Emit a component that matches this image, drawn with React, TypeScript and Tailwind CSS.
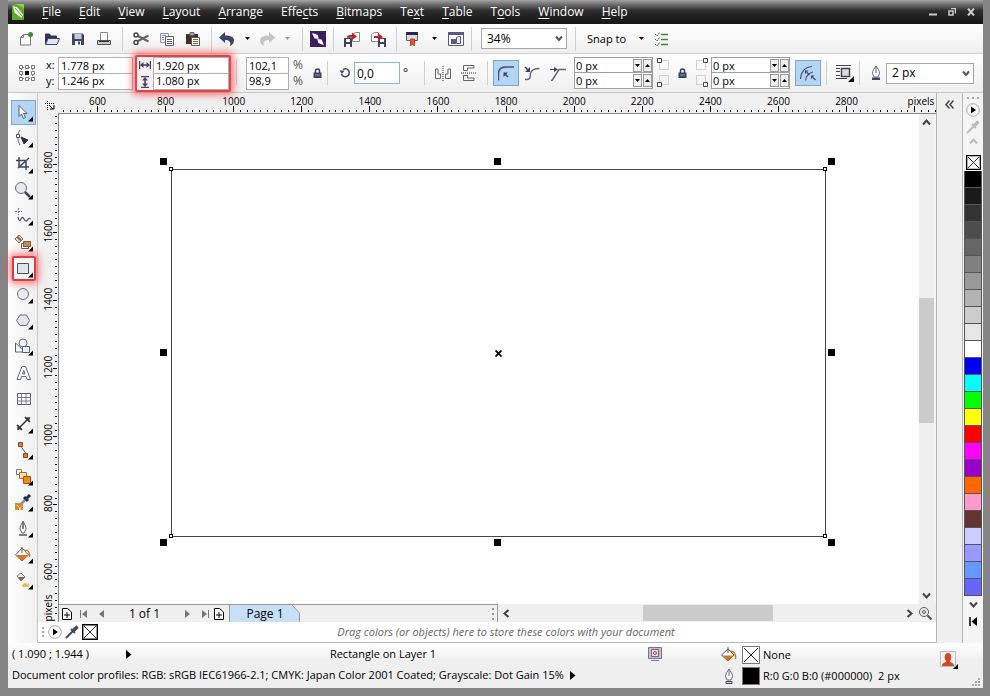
import React from "react";

type Kids = { children?: React.ReactNode };

function Icon({ children, size = "w-4 h-4", box = "0 0 16 16" }: Kids & { size?: string; box?: string }) {
  return (
    <svg className={`${size} shrink-0`} viewBox={box} fill="none" stroke="#3d4468" strokeWidth="1" aria-hidden="true">
      {children}
    </svg>
  );
}

/* ---------- menu bar ---------- */

const menus: [string, string, string][] = [
  ["", "F", "ile"],
  ["", "E", "dit"],
  ["", "V", "iew"],
  ["", "L", "ayout"],
  ["", "A", "rrange"],
  ["Effe", "c", "ts"],
  ["", "B", "itmaps"],
  ["Te", "x", "t"],
  ["", "T", "able"],
  ["T", "o", "ols"],
  ["", "W", "indow"],
  ["", "H", "elp"],
];

function MenuBar() {
  return (
    <header className="flex h-6 shrink-0 items-center bg-linear-to-b from-[#a4a4a4] via-[#2c2c2c] via-45% to-[#151515] text-white">
      <svg className="mx-1 h-4 w-3 shrink-0" viewBox="0 0 12 16" aria-hidden="true">
        <path d="M0 0h12v16H0z" fill="#5cab2f" />
        <path d="M0 0h12v4L4 0z" fill="#8fd05a" />
        <path d="M1 2l4.500 1.500L11 11l-1.500 3L2.500 8.500z" fill="#f4faee" />
        <path d="M3 4l7 8" stroke="#3d8020" strokeWidth=".8" />
      </svg>
      <nav className="flex grow gap-[18px] pl-[14px] text-[12px] leading-4">
        {menus.map(([a, b, c]) => (
          <button key={a + b + c} type="button">
            {a}
            <span className="underline underline-offset-2">{b}</span>
            {c}
          </button>
        ))}
      </nav>
      <div className="flex items-center gap-[11px] pr-2">
        <button type="button" aria-label="Minimize">
          <Icon size="w-2 h-2" box="0 0 8 8"><path d="M0 6.500h8" stroke="#ccc" strokeWidth="2" /></Icon>
        </button>
        <button type="button" aria-label="Restore">
          <Icon size="w-2 h-2" box="0 0 8 8"><path d="M1 3h4v4H1zM3 .5h4.500v5" stroke="#ccc" strokeWidth="1.500" /></Icon>
        </button>
        <button type="button" aria-label="Close">
          <Icon size="w-2 h-2" box="0 0 8 8"><path d="M1 .5l6 7M7 .5l-6 7" stroke="#ccc" strokeWidth="2" /></Icon>
        </button>
      </div>
    </header>
  );
}

/* ---------- shared pieces ---------- */

function Separator() {
  return <div className="mx-[5px] h-6 w-px shrink-0 bg-[#cfcfcf]" />;
}

function Cell({ label, wide, children }: Kids & { label: string; wide?: boolean }) {
  return (
    <button type="button" aria-label={label} className={`flex h-6 shrink-0 items-center justify-center ${wide ? "w-[26px]" : "w-5"}`}>
      {children}
    </button>
  );
}

function Caret({ color = "#000" }: { color?: string }) {
  return <Icon size="w-[5px] h-[3px]" box="0 0 5 3"><path d="M0 0h5L2.500 3z" fill={color} stroke="none" /></Icon>;
}

function DropDown({ label, value, width }: { label: string; value: string; width: string }) {
  return (
    <div className={`relative shrink-0 ${width}`}>
      <select aria-label={label} className="block h-[21px] w-full appearance-none border border-[#a9a9a9] bg-white pl-[5px] text-[12px] leading-4">
        <option>{value}</option>
      </select>
      <svg className="pointer-events-none absolute top-[7px] right-1 h-[7px] w-2" viewBox="0 0 8 7" fill="none" aria-hidden="true">
        <path d="M1 1.500l3 3.500 3-3.500" stroke="#555" strokeWidth="2" />
      </svg>
    </div>
  );
}

/* ---------- standard toolbar ---------- */

function StandardBar() {
  return (
    <div className="flex h-[30px] shrink-0 items-center border-b border-[#cfcfcf] bg-linear-to-b from-white to-[#efefef] pl-[5px]">
      <Cell label="New" wide>
        <Icon><path d="M2.500 6.500l3-3h7v10.500h-10z" fill="#fff" stroke="#777" /><path d="M2.500 6.500h3v-3" stroke="#777" /><circle cx="12.500" cy="3.500" r="2.500" fill="#2f8f3c" stroke="none" /></Icon>
      </Cell>
      <Cell label="Open" wide>
        <Icon><path d="M1.500 13V3h4l1 2h6v2" fill="#2e3558" stroke="#2e3558" /><path d="M1.500 13.500L4 7.500h11.500L13 13.500z" fill="#e4e4ea" /></Icon>
      </Cell>
      <Cell label="Save" wide>
        <Icon><path d="M2 2.500h10.500L14 4v10H2z" fill="#3d4468" stroke="none" /><path d="M4.500 3h7v5h-7z" fill="#c9cbdc" stroke="none" /><path d="M5 10h6v4H5z" fill="#fff" stroke="none" /><path d="M8 10.500h2v3H8z" fill="#3d4468" stroke="none" /></Icon>
      </Cell>
      <Cell label="Print" wide>
        <Icon><path d="M4.500 9.500v-8h7v8" fill="#fff" stroke="#888" /><path d="M1.500 9.500h13v4h-13z" fill="#c8c8ce" stroke="#555" /><path d="M3 10.500h10" stroke="#333" /><path d="M12 12.500h1" stroke="#dc3" /></Icon>
      </Cell>
      <Separator />
      <Cell label="Cut" wide>
        <Icon><path d="M15.500 4.500L5 10M15.500 10.500L5 5" stroke="#666" strokeWidth="2" /><circle cx="3" cy="4" r="2" stroke="#444" strokeWidth="1.500" /><circle cx="3" cy="11.500" r="2" stroke="#444" strokeWidth="1.500" /></Icon>
      </Cell>
      <Cell label="Copy" wide>
        <Icon><path d="M1.500 2.500h8v9h-8z" fill="#eef" stroke="#8d92aa" /><path d="M3 4.500h4M3 6.500h2M3 8.500h2" stroke="#8d92aa" /><path d="M6.500 5.500h8v9h-8z" fill="#fff" stroke="#555c7c" /><path d="M8 8.500h5M8 10.500h5M8 12.500h5" stroke="#555c7c" /></Icon>
      </Cell>
      <Cell label="Paste" wide>
        <Icon><path d="M1 3h12v10H1z" fill="#3b302c" stroke="none" /><path d="M5 1.500h4v3H5z" fill="#aaa" stroke="#666" /><path d="M6.500 6.500h8v8h-8z" fill="#fff" stroke="#6b5a4c" /><path d="M8 8.500h5M8 10.500h5M8 12.500h5" stroke="#7d6757" /></Icon>
      </Cell>
      <Separator />
      <Cell label="Undo">
        <Icon><path d="M0 6.500L6 1v3.500c6 0 9 1.500 9 5 0 3-2 4.500-4 5.500 1-3.500 0-6-5-6V12z" fill="#3d4468" stroke="none" /></Icon>
      </Cell>
      <Cell label="Undo history"><Caret /></Cell>
      <Cell label="Redo">
        <Icon><path d="M16 6.500L10 1v3.500c-6 0-9 1.500-9 5 0 3 2 4.500 4 5.500-1-3.500 0-6 5-6V12z" fill="#c4c4c4" stroke="none" /></Icon>
      </Cell>
      <Cell label="Redo history"><Caret color="#999" /></Cell>
      <Separator />
      <Cell label="Search content">
        <Icon><path d="M0 0h16v16H0z" fill="#3e1d60" stroke="none" /><path d="M2 2l3.500 1L8 4.500 8.500 8 4.500 7.500z" fill="#fff" stroke="none" /><path d="M14 14l-3.500-1L8 11.500 7.500 8l4 .5z" fill="#fff" stroke="none" /></Icon>
      </Cell>
      <Separator />
      <Cell label="Import" wide>
        <Icon><path d="M8.500 3.500l3-2h4v9h-7z" fill="#fff" stroke="#888" /><path d="M0 7h8v9H0z" fill="#3d4468" stroke="none" /><path d="M2 8h4v3H2zM2 13h4v3H2z" fill="#fff" stroke="none" /><path d="M3 7c0-3 2-3 5-3V1.500l5 4L8 9V6.500z" fill="#b8222d" stroke="none" /></Icon>
      </Cell>
      <Cell label="Export" wide>
        <Icon><path d="M1.500 3.500l3-2h4v9h-7z" fill="#fff" stroke="#888" /><path d="M8 7h8v9H8z" fill="#3d4468" stroke="none" /><path d="M10 8h4v3h-4zM10 13h4v3h-4z" fill="#fff" stroke="none" /><path d="M4 5h4V2l5 4-5 4V7H4z" fill="#b8222d" stroke="none" /></Icon>
      </Cell>
      <Separator />
      <Cell label="Application launcher">
        <Icon><path d="M2.500 1.500h11v8h-11z" fill="#dcdce4" stroke="#555c7c" /><path d="M2 1h12v3H2z" fill="#242a48" stroke="none" /><path d="M6.500 8h4v7l-2-2-2 2z" fill="#e0582a" stroke="#c8401c" /></Icon>
      </Cell>
      <button type="button" aria-label="Launcher list" className="flex h-6 w-6 items-center justify-center"><Caret /></button>
      <Cell label="Welcome screen">
        <Icon><path d="M.5 1.500h15v13H.5z" fill="#fff" stroke="#555c7c" /><path d="M0 1h16v3H0z" fill="#555c7c" stroke="none" /><path d="M3 8h5v5H3z" fill="#555c7c" stroke="none" /><path d="M8.500 6.500l2-1h2v7h-4z" fill="#e8eaf4" stroke="#555c7c" /></Icon>
      </Cell>
      <Separator />
      <div className="pr-[3px] pl-1"><DropDown label="Zoom level" value="34%" width="w-[86px]" /></div>
      <Separator />
      <button type="button" className="ml-1 flex items-center gap-[13px] pl-[2px] text-[11px] leading-4">
        Snap to
        <Caret />
      </button>
      <button type="button" aria-label="Options" className="ml-[10px]">
        <Icon><path d="M7 3.500h7M7 8.500h7M7 13.500h7" stroke="#4a7c4c" strokeWidth="1.500" /><path d="M1 3l2 2 3-4M1 8l2 2 3-4M1 13l2 2 3-4" stroke="#2f6f38" strokeDasharray="2 .6" /></Icon>
      </button>
    </div>
  );
}

/* ---------- property bar ---------- */

function Pair({ width, values, name }: { width: string; values: [string, string]; name: string }) {
  return (
    <div className={`flex shrink-0 flex-col ${width}`}>
      <input aria-label={`${name} horizontal`} defaultValue={values[0]} className="h-[17px] w-full border border-[#b0b0b0] bg-white px-[2px] text-[11px] leading-4" />
      <input aria-label={`${name} vertical`} defaultValue={values[1]} className="h-4 w-full border border-t-0 border-[#b0b0b0] bg-white px-[2px] text-[11px] leading-4" />
    </div>
  );
}

function SpinRow({ name, first }: { name: string; first?: boolean }) {
  return (
    <div className={`flex h-4 items-center border border-[#a0a0a0] bg-white ${first ? "" : "border-t-0"}`}>
      <input aria-label={name} defaultValue="0 px" className="h-full w-0 grow px-px text-[11px] leading-4" />
      <button type="button" aria-label={`${name} down`} className="flex h-[13px] w-[9px] items-center justify-center border border-[#999] bg-[#f0f0f0]"><Caret /></button>
      <button type="button" aria-label={`${name} up`} className="ml-px flex h-[13px] w-[9px] rotate-180 items-center justify-center border border-[#999] bg-[#f0f0f0]"><Caret /></button>
    </div>
  );
}

function Corners({ name }: { name: string }) {
  return (
    <div className="w-[79px] shrink-0">
      <SpinRow name={`${name} top corner`} first />
      <SpinRow name={`${name} bottom corner`} />
    </div>
  );
}

function Lock() {
  return (
    <button type="button" aria-label="Lock ratio" className="shrink-0">
      <Icon size="w-[9px] h-[10px]" box="0 0 9 10"><path d="M2.500 5V2.500c0-2 4-2 4 0V5" strokeWidth="1.500" /><path d="M.5 4.500h8V10h-8z" fill="#3d4468" stroke="none" /><path d="M2 7h5" stroke="#8d92aa" /></Icon>
    </button>
  );
}

function CornerMarks({ flip }: { flip?: boolean }) {
  return (
    <svg className="h-8 w-3 shrink-0" viewBox="0 0 12 32" fill="none" stroke="#aaa" aria-hidden="true">
      <path d={flip ? "M.5 3.500h9v9h-9zM.5 18.500h9v9h-9z" : "M2.500 3.500h9v9h-9zM2.500 18.500h9v9h-9z"} strokeDasharray="1 1" />
      <path d={flip ? "M7.500 1.500h4v4h-4zM7.500 25.500h4v4h-4z" : "M.5 1.500h4v4h-4zM.5 25.500h4v4h-4z"} fill="#fff" stroke="#444" />
    </svg>
  );
}

function PropertyBar() {
  return (
    <div className="flex h-[39px] shrink-0 items-center border-b border-[#c8c8c8] bg-linear-to-b from-white to-[#efefef] pl-[11px]">
      <Icon size="w-4 h-4">
        <path d="M2 2.500h12M2 13.500h12M2.500 2v12M13.500 2v12" stroke="#888" strokeDasharray="1 1" />
        <path d="M.5 .5h3v3h-3zM6.500 .5h3v3h-3zM12.500 .5h3v3h-3zM.5 6.500h3v3h-3zM12.500 6.500h3v3h-3zM.5 12.500h3v3h-3zM6.500 12.500h3v3h-3zM12.500 12.500h3v3h-3z" fill="#fff" stroke="#777" />
        <path d="M6 6h4v4H6z" fill="#000" stroke="none" />
      </Icon>
      <div className="ml-[11px] w-3 shrink-0 text-[11px] leading-4"><div>x:</div><div>y:</div></div>
      <Pair name="Position" width="w-[75px]" values={["1.778 px", "1.246 px"]} />
      <div className="relative ml-[2px] flex shrink-0 items-center rounded-[2px] border-2 border-[#e0454c] bg-[#f6f0f0] shadow-[0_0_7px_3px_rgba(255,60,60,0.65)]">
        <div className="flex w-4 flex-col items-center gap-[5px]">
          <Icon size="w-3 h-3" box="0 0 12 12"><path d="M.5 2v8M11.500 2v8M2 6h8" strokeWidth="1.500" /><path d="M1 6l3.500-3v6zM11 6L7.500 3v6z" fill="#3d4468" stroke="none" /></Icon>
          <Icon size="w-3 h-3" box="0 0 12 12"><path d="M2 .5h8M2 11.500h8M6 2v8" strokeWidth="1.500" /><path d="M6 1l3 3.500H3zM6 11l3-3.500H3z" fill="#3d4468" stroke="none" /></Icon>
        </div>
        <Pair name="Size" width="w-[76px]" values={["1.920 px", "1.080 px"]} />
      </div>
      <Separator />
      <div className="ml-1"><Pair name="Scale" width="w-[43px]" values={["102,1", "98,9"]} /></div>
      <div className="ml-1 w-[11px] shrink-0 text-[12px] leading-4 text-[#555]"><div>%</div><div>%</div></div>
      <div className="ml-[9px] flex"><Lock /></div>
      <Separator />
      <label className="ml-[6px] flex shrink-0 items-center gap-[3px] text-[12px]">
        <Icon size="w-3 h-3" box="0 0 12 12"><path d="M2.500 7a4 4 0 1 0 1.500-4.500" strokeWidth="1.500" /><path d="M.5 3.500h5L3 7z" fill="#3d4468" stroke="none" /></Icon>
        <input aria-label="Rotation" defaultValue="0,0" className="h-[22px] w-[46px] border border-[#8db4d4] bg-white px-[2px] text-[12px]" />
        <span className="w-3 leading-4">°</span>
      </label>
      <div className="ml-1"><Separator /></div>
      <Cell label="Mirror horizontally" wide>
        <Icon><path d="M.5 4v9.500h5V9H3V4zM15.500 4v9.500h-5V9H13V4z" stroke="#666" /><path d="M8 1v15" strokeDasharray="1 1" stroke="#222" /></Icon>
      </Cell>
      <Cell label="Mirror vertically" wide>
        <Icon><path d="M13 .5H2.500v5h4V3H13zM13 15.500H2.500v-5h4V13H13z" stroke="#666" /><path d="M0 8h16" strokeDasharray="1 1" stroke="#222" /></Icon>
      </Cell>
      <Separator />
      <button type="button" aria-label="Round corner" className="flex h-[26px] w-[26px] shrink-0 items-center justify-center border border-[#7da7d2] bg-[#b4d5f4]">
        <Icon><path d="M.5 15.500V9c0-4 2-7 7-7H16" strokeWidth="1.500" stroke="#4a5370" /><path d="M10 12L7 9" strokeWidth="1.500" /><path d="M5.500 7.500H10L5.500 12z" fill="#3d4468" stroke="none" /></Icon>
      </button>
      <Cell label="Scalloped corner" wide>
        <Icon><path d="M1 14.500h2c4 0 3-3 3.500-6 .5-3 3-5 9-5" stroke="#666" strokeWidth="1.500" /><path d="M1 2l3 3" strokeWidth="1.500" /><path d="M6 2v5H1z" fill="#3d4468" stroke="none" /></Icon>
      </Cell>
      <Cell label="Chamfered corner" wide>
        <Icon><path d="M1 15.500h1L9 4.500h7" stroke="#666" strokeWidth="1.500" /><path d="M0 4.500h6" stroke="#3d4468" /><path d="M4 2l4 2.500L4 7z" fill="#3d4468" stroke="none" /></Icon>
      </Cell>
      <div className="ml-[3px] flex items-center gap-[4px]">
        <Corners name="Left" />
        <CornerMarks />
      </div>
      <div className="mx-[9px] flex"><Lock /></div>
      <div className="flex items-center gap-[3px]">
        <CornerMarks flip />
        <Corners name="Right" />
      </div>
      <button type="button" aria-label="Relative corner scaling" className="ml-[5px] flex h-[26px] w-[26px] shrink-0 items-center justify-center border border-[#7da7d2] bg-[#b4d5f4]">
        <Icon><path d="M.5 14C1 6 5 2 12 1.500M5.500 15.500c.5-4 3-7.500 7.500-8.500" strokeWidth="1.200" stroke="#4a5370" /><path d="M5 5.500h3.500L5 9zM11 10.500h3.500L11 14z" fill="#3d4468" stroke="none" /><path d="M7 7.500l2.500 2.500M13 12.500l2.500 2.500" strokeWidth="1.200" /></Icon>
      </button>
      <Separator />
      <button type="button" aria-label="Wrap text" className="ml-1 shrink-0">
        <Icon size="w-[18px] h-[18px]" box="0 0 18 18"><path d="M0 1.500h15M0 14.500h11M0 4.500h4M0 7.500h4M0 11.500h4" stroke="#444" /><path d="M5.500 4.500h8v8h-8z" fill="#dcdce4" stroke="#444" strokeWidth="1.500" /><path d="M18 12v6h-6z" fill="#000" stroke="none" /></Icon>
      </button>
      <Separator />
      <label className="ml-[3px] flex shrink-0 items-center gap-[2px]">
        <Icon><path d="M8 1C6 3.500 4.500 6 4.500 8.500L6 12h4l1.500-3.500C11.500 6 10 3.500 8 1z" fill="#fff" stroke="#667" /><path d="M8 2v6" stroke="#667" /><path d="M4 12.500h8V15H4z" fill="#3d4468" stroke="none" /></Icon>
        <DropDown label="Outline width" value="2 px" width="w-[88px]" />
      </label>
    </div>
  );
}

/* ---------- toolbox ---------- */

const tools: { name: string; flyout: boolean; art: React.ReactNode }[] = [
  { name: "Pick", flyout: true, art: <path d="M4 1.500v11l2.500-2.500 2 4.500 2-1-2-4H12z" fill="#fff" stroke="#555c7c" /> },
  { name: "Shape", flyout: true, art: <><path d="M5 0C2 4 2 10 5 15" stroke="#666" /><path d="M1.500 4.500h3v3h-3z" fill="#fff" stroke="#555" /><path d="M6 7l7 3-4 4z" fill="#2a2f4a" stroke="#2a2f4a" /></> },
  { name: "Crop", flyout: true, art: <path d="M4 1v10h10M1 4.500h10V14M3 12L14 2" stroke="#3d4468" strokeWidth="1.500" /> },
  { name: "Zoom", flyout: true, art: <><circle cx="6" cy="6" r="5.500" fill="#e8e8ee" stroke="#666c80" /><path d="M10 10l5 5" stroke="#3d4468" strokeWidth="2.500" /></> },
  { name: "Freehand", flyout: true, art: <><path d="M3.500 0v7M0 3.500h7" stroke="#777" strokeDasharray="2 1" /><path d="M3 9c1 5 2 4 3 2s2-2 3 0 2 3 3.500 1 2-2 3-1" stroke="#555c7c" strokeWidth="1.300" /></> },
  { name: "Smart fill", flyout: true, art: <><path d="M0 5l4-4 4 4-4 4z" fill="#ecd9c0" stroke="#7a6654" /><path d="M2 2.500l4 4" stroke="#7a6654" strokeWidth="2" /><path d="M6.500 9.500h7v5h-7z" fill="#fff" stroke="#555c7c" /><path d="M8.500 7.500h7v5h-7z" fill="#c98a4a" stroke="#7d5a36" /></> },
  { name: "Rectangle", flyout: true, art: <path d="M2.500 3.500h11v10h-11z" fill="#e3e5ee" stroke="#4c5168" /> },
  { name: "Ellipse", flyout: true, art: <circle cx="8" cy="8" r="5.500" fill="#e9ebf2" stroke="#666c80" /> },
  { name: "Polygon", flyout: true, art: <path d="M5 3h6.500l3 5.500-3 5H5l-3.500-5z" fill="#e3e5ee" stroke="#666c80" /> },
  { name: "Basic shapes", flyout: true, art: <><path d="M.5 5v9H10z" fill="#fff" stroke="#555c7c" /><circle cx="8" cy="5" r="4" fill="#eef0f6" stroke="#666c80" /><path d="M7.500 8.500h7v6h-7z" fill="#eef0f6" stroke="#555c7c" /></> },
  { name: "Text", flyout: false, art: <path d="M2 15.500L7 2.500h3.500l5 13h-3.500l-1-3H6.500l-1 3zM7.500 10h2.500L8.800 6.500z" fill="#fff" stroke="#5c6380" /> },
  { name: "Table", flyout: false, art: <><path d="M2.500 3.500h13v11h-13z" fill="#fff" stroke="#555c7c" /><path d="M2 7.500h14M2 11h14M6.500 4v11M11 4v11" stroke="#777d98" /></> },
  { name: "Dimension", flyout: true, art: <><path d="M2 9l5 5M10 1l5 5M5 11l7-7" stroke="#333" strokeWidth="1.500" /><path d="M2 14l1-5 4 4zM15 1l-5 1 4 4z" fill="#333" stroke="none" /></> },
  { name: "Connector", flyout: true, art: <><path d="M5 3l7 10" stroke="#666" /><path d="M3.500 .5h4v4h-4zM8.500 11.500h4v4h-4z" fill="#d98040" stroke="#8a4a20" /></> },
  { name: "Blend", flyout: true, art: <><path d="M1.500 1.500h5v5h-5z" fill="#fff" stroke="#777" /><path d="M4.500 4.500h7v6h-7z" fill="#ffe0a0" stroke="#a07030" /><path d="M8.500 8.500h7v7h-7z" fill="#f08a20" stroke="#a05010" /></> },
  { name: "Color eyedropper", flyout: true, art: <><path d="M0 9h8v7H0z" fill="#e08a24" stroke="none" /><path d="M2 11l2 2M5 13v3" stroke="#fff" /><path d="M6 10l6-6" stroke="#8d92aa" strokeWidth="2.500" /><path d="M9 3l4 4M11 5l4-4" stroke="#2a2f4a" strokeWidth="3" /></> },
  { name: "Outline pen", flyout: true, art: <><path d="M8 1C6.500 4 5 6.500 5 9l2 4h2l2-4c0-2.500-1.500-5-3-8z" fill="#fff" stroke="#667" /><path d="M8 2v7M4 15h8" stroke="#556" strokeWidth="1.500" /></> },
  { name: "Fill", flyout: true, art: <><path d="M.5 9L7 2l6.500 7L7 15z" fill="#fff" stroke="#555c7c" /><path d="M1 9h12l-6 6z" fill="#e07820" stroke="none" /><path d="M7 7V1" stroke="#557" /><path d="M9 4c4 0 6 2 5.500 7" stroke="#e07820" strokeWidth="1.500" /></> },
  { name: "Interactive fill", flyout: true, art: <><path d="M2 4l4-3 4 4-4 4z" fill="#eee" stroke="#777" /><path d="M3 5h7L6 9z" fill="#7d6757" stroke="none" /><path d="M7 15c0-4 3-5 5-3l2-1v4z" fill="#e9c050" stroke="none" /></> },
];

function Toolbox() {
  return (
    <aside className="flex w-[30px] shrink-0 flex-col items-center gap-px border-r border-[#c8c8c8] bg-linear-to-r from-white to-[#efefef] pt-[7px] pl-[2px]">
      {tools.map((t) => (
        <button
          key={t.name}
          type="button"
          aria-label={t.name}
          className={
            t.name === "Pick"
              ? "flex h-[25px] w-[25px] items-center justify-center border border-[#7da7d2] bg-[#b4d5f4]"
              : t.name === "Rectangle"
                ? "relative flex h-[25px] w-6 items-center justify-center rounded-[2px] border-2 border-[#dc3c48] shadow-[0_0_7px_3px_rgba(255,60,60,0.6)]"
                : "flex h-[25px] w-6 items-center justify-center"
          }
        >
          <Icon size="w-[18px] h-[18px]" box="0 0 18 18">
            {t.art}
            {t.flyout && <path d="M18 12.500v5h-5z" fill="#000" stroke="none" />}
          </Icon>
        </button>
      ))}
    </aside>
  );
}

/* ---------- rulers ---------- */

const STEP = 68.1;
const range = (n: number) => Array.from({ length: n }, (_, i) => i);

function TopRuler() {
  const first = 39.5;
  return (
    <div className="flex h-[21px] shrink-0 bg-[#f0f0f0]">
      <svg className="h-full w-5 shrink-0" viewBox="0 0 20 21" stroke="#000" fill="none" aria-hidden="true">
        <path d="M7 10.500h9M9.500 8v9" strokeDasharray="1 1" />
        <path d="M11 12l4 4M12 16h4v-4" />
      </svg>
      <svg className="h-full grow overflow-hidden border-b border-[#888] text-[10px]" fill="#000" role="img" aria-label="Horizontal ruler">
        {range(129).map((i) => (
          <rect key={i} x={Math.round(first - 0.5 + ((i - 5) * STEP) / 10)} y={i % 10 === 5 ? 13 : 17} width="1" height={i % 10 === 5 ? 6 : 2} />
        ))}
        {range(12).map((i) => (
          <text key={i} x={first + i * STEP} y="12" textAnchor="middle">{600 + i * 200}</text>
        ))}
        <text x="863" y="12" textAnchor="middle">pixels</text>
      </svg>
    </div>
  );
}

function LeftRuler() {
  const first = 50;
  return (
    <svg className="h-full w-[21px] shrink-0 overflow-hidden border-r border-[#888] bg-[#f0f0f0] text-[10px]" fill="#000" role="img" aria-label="Vertical ruler">
      {range(74).map((i) => (
        <rect key={i} x={i % 10 === 7 ? 15 : 17} y={Math.round(first + ((i - 7) * STEP) / 10)} width={i % 10 === 7 ? 4 : 2} height="1" />
      ))}
      {range(7).map((i) => (
        <text key={i} transform={`translate(14 ${first - 1 + i * STEP}) rotate(-90)`} textAnchor="middle">{1800 - i * 200}</text>
      ))}
      <text transform="translate(14 494) rotate(-90)" textAnchor="middle">pixels</text>
    </svg>
  );
}

/* ---------- drawing window ---------- */

const handles = [
  "-left-[12px] -top-[12px]", "left-[322px] -top-[12px]", "-right-[10px] -top-[12px]",
  "-left-[12px] top-[179px]", "-right-[10px] top-[179px]",
  "-left-[12px] -bottom-[10px]", "left-[322px] -bottom-[10px]", "-right-[10px] -bottom-[10px]",
];
const nodes = ["-left-[3px] -top-[3px]", "-right-[2px] -top-[3px]", "-left-[3px] -bottom-[2px]", "-right-[2px] -bottom-[2px]"];

function Canvas() {
  return (
    <main className="relative grow overflow-hidden bg-white">
      <div className="absolute top-[55px] left-[112px] h-[368px] w-[655px] border border-[#444]">
        {handles.map((p) => <span key={p} className={`absolute h-[7px] w-[7px] bg-black ${p}`} />)}
        {nodes.map((p) => <span key={p} className={`absolute h-1 w-1 border border-black bg-white ${p}`} />)}
        <svg className="absolute top-[180px] left-[323px] h-[7px] w-[7px]" viewBox="0 0 7 7" aria-hidden="true">
          <path d="M.5 .5l6 6M6.500 .5l-6 6" stroke="#000" strokeWidth="1.800" />
        </svg>
      </div>
    </main>
  );
}

function Chevron({ turn = "", color = "#444" }: { turn?: string; color?: string }) {
  return (
    <svg className={`h-[9px] w-[9px] shrink-0 ${turn}`} viewBox="0 0 9 9" fill="none" aria-hidden="true">
      <path d="M1 2.500l3.500 4L8 2.500" stroke={color} strokeWidth="2" />
    </svg>
  );
}

function VScroll() {
  return (
    <div className="mr-[2px] flex w-[15px] shrink-0 flex-col items-center justify-between bg-[#efefef] py-[4px]">
      <Chevron turn="rotate-180" />
      <div className="flex w-full grow flex-col">
        <div className="grow-[171]" />
        <div className="w-full grow-[125] bg-[#cbcbcb]" />
        <div className="grow-[168]" />
      </div>
      <Chevron />
    </div>
  );
}

function AddPage() {
  return (
    <button type="button" aria-label="Add page">
      <Icon size="w-3 h-3" box="0 0 12 12"><path d="M1.500 .5h5l4 3.500v7.500h-9z" fill="#fff" stroke="#000" /><path d="M6 4v6M3 7h6" stroke="#000" /></Icon>
    </button>
  );
}

function Arrow({ label, left, bar }: { label: string; left?: boolean; bar?: boolean }) {
  return (
    <button type="button" aria-label={label} className={`flex w-[17px] justify-center ${left ? "rotate-180" : ""}`}>
      <Icon size="w-2 h-2" box="0 0 8 8"><path d="M1 0l5 4-5 4z" fill="#777" stroke="none" />{bar && <path d="M7.500 0v8" stroke="#777" />}</Icon>
    </button>
  );
}

function PageBar() {
  return (
    <div className="flex h-[18px] shrink-0 bg-[#efefef]">
      <div className="flex min-w-0 basis-[439px] items-center border-t border-r border-[#999] pl-[2px]">
        <AddPage />
        <div className="ml-[3px] flex"><Arrow label="First page" left bar /><Arrow label="Previous page" left /></div>
        <span className="w-[69px] text-center text-[12px] leading-4">1 of 1</span>
        <div className="flex"><Arrow label="Next page" /><Arrow label="Last page" bar /></div>
        <AddPage />
        <button type="button" className="relative ml-1 h-full w-[71px] border-l border-[#999] text-[12px] leading-4">
          <svg className="absolute inset-0 h-full w-full" viewBox="0 0 70 17" preserveAspectRatio="none" aria-hidden="true">
            <path d="M0 0h62l7.500 8V17H0z" fill="#c7e0f8" />
            <path d="M62 0l7.500 8V17" stroke="#999" fill="none" />
          </svg>
          <span className="relative">Page 1</span>
        </button>
        <svg className="mr-[2px] ml-auto h-3 w-[3px]" viewBox="0 0 3 12" fill="#999" aria-hidden="true"><path d="M0 0h2v2H0zM0 5h2v2H0zM0 10h2v2H0z" /></svg>
      </div>
      <div className="flex grow items-center justify-between px-1">
        <Chevron turn="rotate-90" />
        <div className="flex h-4 grow">
          <div className="grow-[132]" />
          <div className="grow-[129] bg-[#cbcbcb]" />
          <div className="grow-[132]" />
        </div>
        <Chevron turn="-rotate-90" />
      </div>
      <button type="button" aria-label="Navigator" className="flex w-[18px] items-center pr-1">
        <Icon size="w-[14px] h-[14px]" box="0 0 14 14"><circle cx="6" cy="6" r="4.500" fill="#eee" stroke="#555" /><circle cx="6" cy="6" r="1.500" stroke="#555" /><path d="M9.500 9.500l4 4" stroke="#555" strokeWidth="2" /></Icon>
      </button>
    </div>
  );
}

function PlayBall() {
  return (
    <button type="button" aria-label="Palette menu">
      <Icon size="w-[14px] h-[14px]" box="0 0 14 14"><circle cx="7" cy="7" r="6.300" fill="#fafafa" stroke="#aaa" /><path d="M5 3.500L10 7l-5 3.500z" fill="#000" stroke="none" /></Icon>
    </button>
  );
}

function Dropper({ color }: { color: string }) {
  return <Icon size="w-[14px] h-[14px]" box="0 0 14 14"><path d="M1 13l7-7" stroke={color} strokeWidth="2" /><path d="M6 4l4 4" stroke={color} strokeWidth="2" /><path d="M8.500 5.500L12.500 1.500" stroke={color} strokeWidth="3.500" /></Icon>;
}

function NoColor({ size }: { size: string }) {
  return <Icon size={size} box="0 0 16 16"><path d="M.7 .7h14.600v14.600H.7z" fill="#fff" stroke="#000" strokeWidth="1.400" /><path d="M2 2l12 12M14 2L2 14" stroke="#222" /></Icon>;
}

function DocumentPalette() {
  return (
    <div className="flex h-[21px] shrink-0 items-center border-b border-[#b8b8b8] bg-white pl-1">
      <svg className="h-3 w-[6px] shrink-0" viewBox="0 0 6 12" fill="#aaa" aria-hidden="true"><path d="M0 1h2v2H0zM0 5h2v2H0zM0 9h2v2H0z" /></svg>
      <div className="flex shrink-0 items-center gap-[3px]">
        <PlayBall />
        <Dropper color="#3d4468" />
        <NoColor size="w-4 h-4" />
      </div>
      <p className="grow pr-[22px] text-center text-[11px] leading-4 text-[#666] italic">Drag colors (or objects) here to store these colors with your document</p>
    </div>
  );
}

const swatches = [
  "#000000", "#1a1a1a", "#333333", "#4d4d4d", "#666666", "#808080", "#999999", "#b3b3b3", "#cccccc", "#e6e6e6",
  "#ffffff", "#0000f2", "#00ffff", "#00ff00", "#ffff00", "#ff0000", "#ff00ff", "#9900cc", "#ff6600", "#ff99cc",
  "#663333", "#ccccff", "#9999ff", "#6699ff", "#6666ff",
];

function Palette() {
  return (
    <aside className="flex w-[21px] shrink-0 flex-col items-center border-l border-[#b8b8b8] bg-[#f4f4f4]">
      <svg className="mt-1 h-[3px] w-3" viewBox="0 0 12 3" fill="#aaa" aria-hidden="true"><path d="M0 0h2v2H0zM5 0h2v2H5zM10 0h2v2h-2z" /></svg>
      <div className="mt-[3px] flex h-[51px] flex-col items-center gap-[3px]">
        <PlayBall />
        <Dropper color="#bbb" />
        <Chevron turn="rotate-180" color="#bbb" />
      </div>
      <button type="button" aria-label="No color" className="flex h-[17px] items-center"><NoColor size="w-[15px] h-[15px]" /></button>
      {swatches.map((c) => (
        <button key={c} type="button" aria-label={c} className="h-[17px] w-[18px] shrink-0 border border-t-0 border-[#555]" style={{ backgroundColor: c }} />
      ))}
      <div className="mt-1 flex flex-col items-center gap-2">
        <Chevron />
        <Icon size="w-[9px] h-[9px]" box="0 0 9 9"><path d="M1 0v9" stroke="#000" strokeWidth="1.500" /><path d="M8 0v9L2.500 4.500z" fill="#000" stroke="none" /></Icon>
      </div>
    </aside>
  );
}

/* ---------- status bar ---------- */

function Play() {
  return <Icon size="w-[6px] h-[9px]" box="0 0 6 9"><path d="M0 0l5.500 4.500L0 9z" fill="#000" stroke="none" /></Icon>;
}

function StatusBar() {
  return (
    <footer className="flex h-[45px] shrink-0 justify-between bg-linear-to-b from-white to-[#efefef] to-40% text-[11px] leading-4">
      <div className="flex grow flex-col gap-[5px] pt-[3px] pl-1">
        <div className="flex items-center">
          <span className="w-[114px]">( 1.090 ; 1.944 )</span>
          <Play />
          <span className="w-[502px] text-center">Rectangle on Layer 1</span>
          <span className="ml-[14px]">
            <Icon size="w-[14px] h-[14px]" box="0 0 14 14"><path d="M.5 .5h13v11H.5z" fill="#b8c4dc" stroke="#6878a0" /><path d="M3.500 2.500h7v7h-7z" fill="#f4d8d8" stroke="#b05058" /><circle cx="7" cy="6" r="1.500" stroke="#666" /><path d="M3 13.500h8" stroke="#6878a0" /></Icon>
          </span>
        </div>
        <div className="flex items-center gap-[6px]">
          <span>Document color profiles: RGB: sRGB IEC61966-2.1; CMYK: Japan Color 2001 Coated; Grayscale: Dot Gain 15%</span>
          <Play />
        </div>
      </div>
      <div className="flex w-[270px] shrink-0 justify-between">
        <div className="flex flex-col gap-[3px] pt-[3px] pl-2">
          <div className="flex items-center gap-[3px]">
            <Icon><path d="M.5 8L7 2l6 6-6 6z" fill="#fff" stroke="#555" /><path d="M1 8.500h12L7 14z" fill="#c87a20" stroke="none" /><path d="M7 6V0" stroke="#555" /><path d="M9 4c4 0 6 3 5.500 8" stroke="#c87a20" strokeWidth="1.500" /></Icon>
            <span className="ml-[2px] h-[18px] w-[18px] border border-[#777] bg-white">
              <Icon><path d="M1 1l14 14M15 1L1 15" stroke="#222" /></Icon>
            </span>
            <span>None</span>
          </div>
          <div className="flex items-center gap-[3px]">
            <Icon><path d="M8 1C6 4 4.500 6 4.500 8.500L6 12h4l1.500-3.500C11.500 6 10 4 8 1z" fill="#fff" stroke="#667" /><path d="M8 2v6" stroke="#667" /><path d="M5 13.500h6v2H5z" fill="#dde" stroke="#445" /></Icon>
            <span className="ml-[2px] h-[18px] w-[18px] border border-[#777] bg-black" />
            <span className="whitespace-pre">R:0 G:0 B:0 (#000000)  2 px</span>
          </div>
        </div>
        <div className="flex items-start gap-[14px] pt-2">
          <Icon size="w-[18px] h-[18px]" box="0 0 18 18"><path d="M.5 .5h15v15H.5z" fill="#f4f0ee" stroke="#bbb" /><path d="M2 15c0-4 4-3 4-5-2-2-2-8 2-8s4 6 2 8c0 2 4 1 4 5z" fill="#cc4a24" stroke="none" /><path d="M18 13v5h-5z" fill="#000" stroke="none" /></Icon>
          <svg className="mr-[3px] mb-[2px] h-2 w-2 self-end" viewBox="0 0 8 8" fill="#aaa" aria-hidden="true"><path d="M6 0h2v2H6zM3 3h2v2H3zM6 3h2v2H6zM0 6h2v2H0zM3 6h2v2H3zM6 6h2v2H6z" /></svg>
        </div>
      </div>
    </footer>
  );
}

export default function App() {
  return (
    <div className="flex min-h-screen flex-col bg-[#858585] pr-[7px] pb-2 pl-2 font-['Open_Sans','Noto_Sans',sans-serif] text-black">
      <MenuBar />
      <StandardBar />
      <PropertyBar />
      <div className="flex grow">
        <Toolbox />
        <div className="flex min-w-0 grow flex-col border-r border-[#b8b8b8] bg-[#f0f0f0]">
          <TopRuler />
          <div className="flex grow">
            <LeftRuler />
            <div className="flex min-w-0 grow flex-col">
              <div className="flex grow bg-[#f4f4f4]">
                <Canvas />
                <VScroll />
              </div>
              <PageBar />
            </div>
          </div>
          <DocumentPalette />
        </div>
        <div className="flex w-[25px] shrink-0 justify-center bg-[#efefef] pt-[5px]">
          <button type="button" aria-label="Expand docker" className="h-3">
            <Icon size="w-[9px] h-[9px]" box="0 0 9 9"><path d="M4.500 .5l-3.500 4 3.500 4M8.500 .5l-3.500 4 3.500 4" stroke="#444" strokeWidth="1.500" /></Icon>
          </button>
        </div>
        <Palette />
      </div>
      <StatusBar />
    </div>
  );
}
